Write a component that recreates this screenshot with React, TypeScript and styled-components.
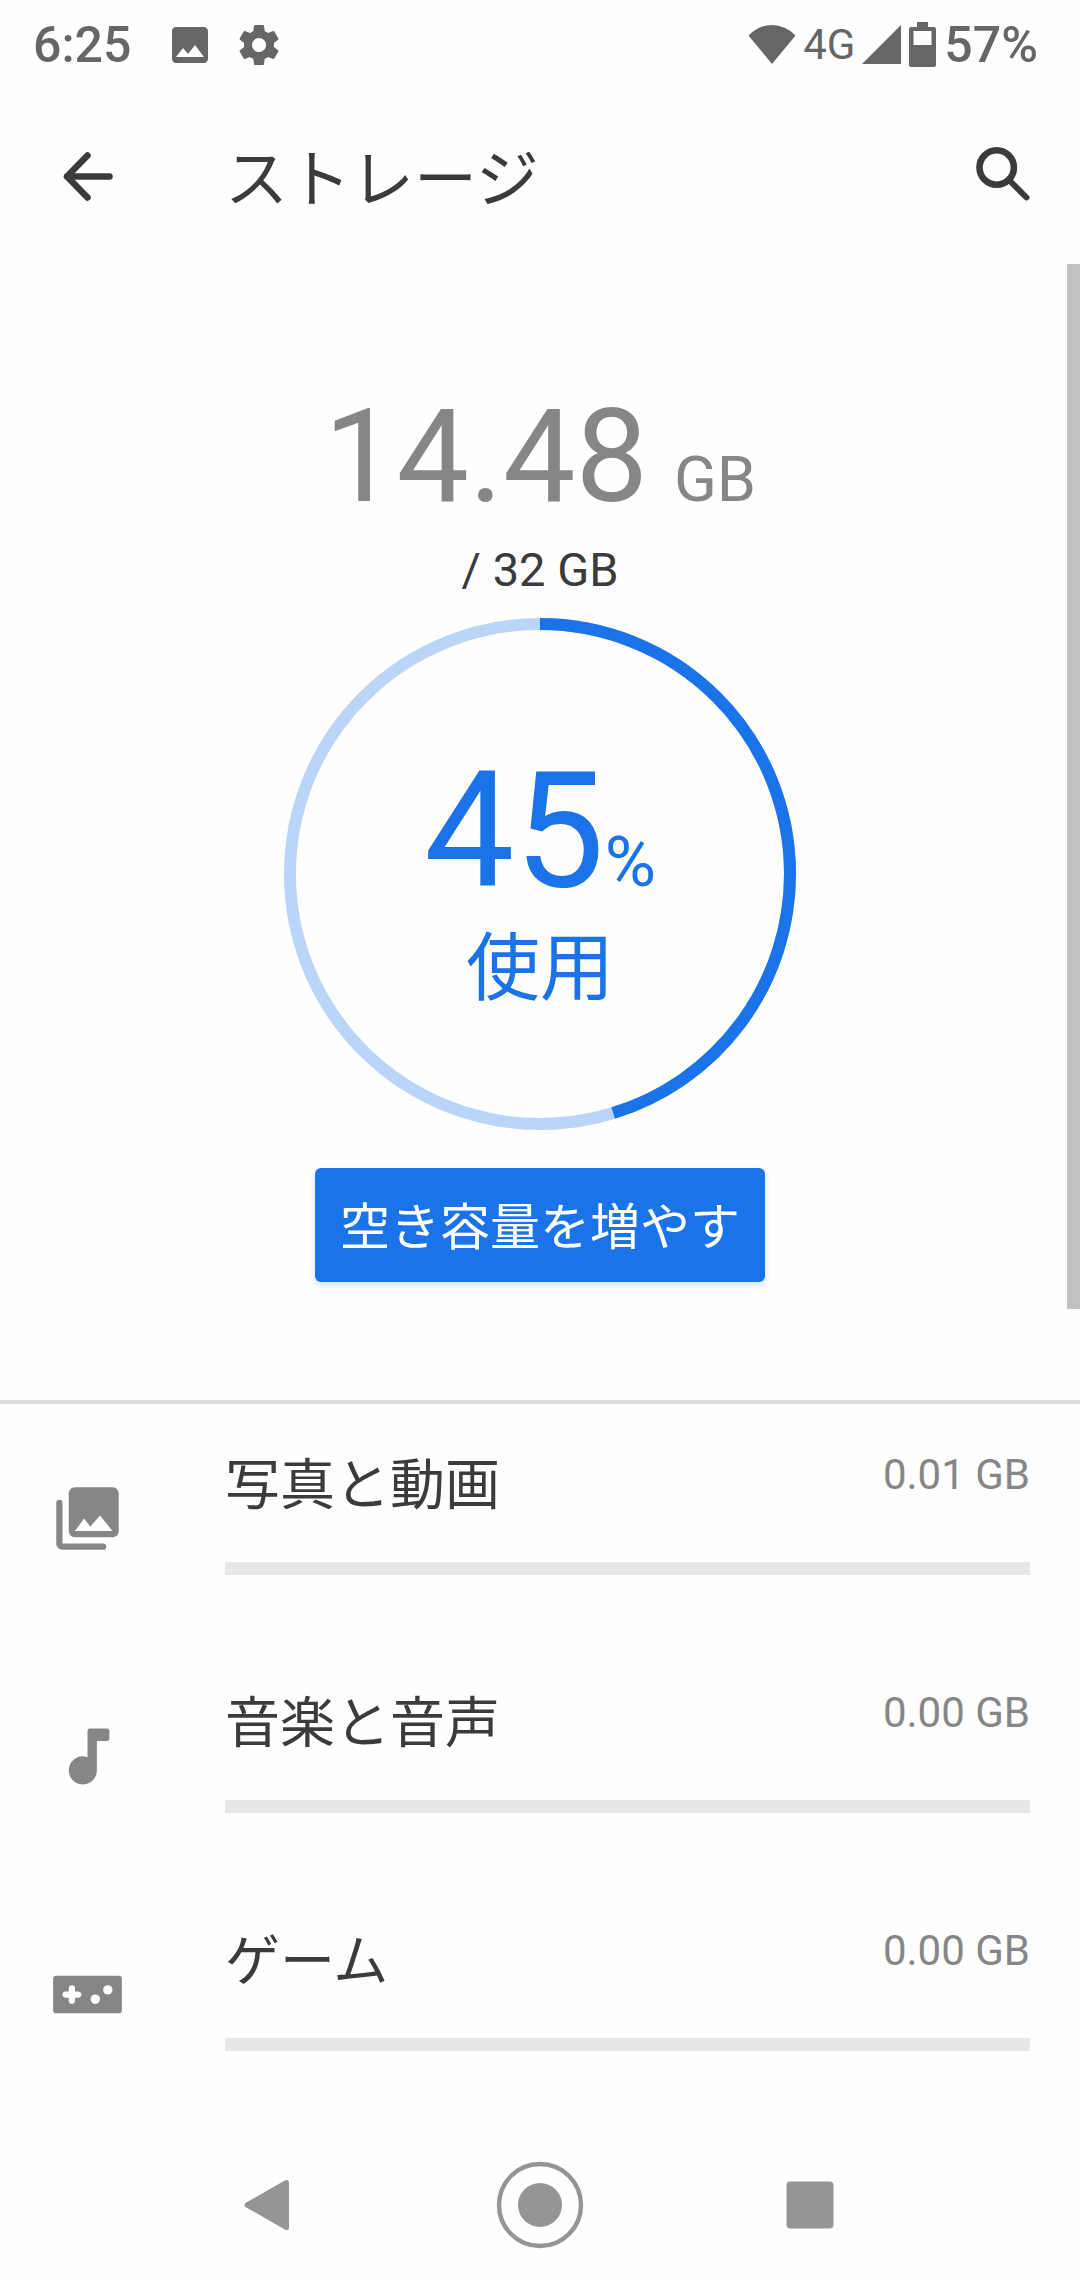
import React from "react";
import styled, { createGlobalStyle } from "styled-components";

const GlobalStyle = createGlobalStyle`
  *, *::before, *::after { box-sizing: border-box; }
  body {
    margin: 0;
    background: #fefefe;
    color: #3b3b3b;
    font-family: Roboto, "Noto Sans CJK JP", sans-serif;
  }
  button { font: inherit; color: inherit; }
`;

const Screen = styled.div`
  display: flex;
  flex-direction: column;
  min-height: 100vh;
`;

const StatusBar = styled.div`
  display: flex;
  align-items: center;
  justify-content: space-between;
  height: 90px;
  padding: 0 42px 0 33px;
  color: #666;
  font-size: 50px;
  font-weight: 500;
  line-height: 56px;
`;

const StatusGroup = styled.div<{ $gap: number }>`
  display: flex;
  align-items: center;
  gap: ${(p) => p.$gap}px;
`;

const Clock = styled.time`
  margin-right: 14px;
`;

const Network = styled.span`
  font-size: 42px;
  font-weight: 400;
`;

const Icon = styled.svg<{ $w: number; $h?: number }>`
  display: block;
  flex: none;
  width: ${(p) => p.$w}px;
  height: ${(p) => p.$h ?? p.$w}px;
  fill: currentColor;
`;

const AppBar = styled.header`
  display: grid;
  grid-template-columns: 173px 1fr auto;
  align-items: center;
  height: 174px;
  padding: 0 40px 0 52px;
`;

const IconButton = styled.button`
  justify-self: start;
  padding: 0;
  border: 0;
  background: none;
`;

const Title = styled.h1`
  margin: 0;
  padding-top: 6px;
  font-size: 63px;
  font-weight: 400;
  line-height: 88px;
`;

const Content = styled.main`
  position: relative;
  flex: 1;
`;

const ScrollThumb = styled.div`
  position: absolute;
  top: 0;
  right: 0;
  width: 13px;
  height: 56%;
  background: #c1c1c1;
`;

const Summary = styled.section`
  display: flex;
  flex-direction: column;
  align-items: center;
  padding: 118px 0;
  border-bottom: 4px solid #dcdcdc;
`;

const Used = styled.p`
  display: flex;
  align-items: baseline;
  gap: 26px;
  margin: 0;
  color: #868686;
  font-size: 129px;
  line-height: 150px;
`;

const UsedUnit = styled.span`
  font-size: 63px;
  line-height: 1;
`;

const Total = styled.p`
  margin: 0 0 10px;
  font-size: 47px;
  line-height: 76px;
`;

const Donut = styled.div`
  display: grid;
  width: 512px;
  height: 512px;
  margin-bottom: 38px;
  color: #1a73e8;

  & > * {
    grid-area: 1 / 1;
  }
`;

const DonutLabel = styled.div`
  display: flex;
  flex-direction: column;
  align-items: center;
  justify-content: center;
  gap: 10px;
  padding-top: 20px;
`;

const Percent = styled.span`
  font-size: 161px;
  line-height: 160px;
`;

const PercentSign = styled.span`
  font-size: 70px;
  line-height: 1;
`;

const UsedCaption = styled.span`
  font-size: 74px;
  line-height: 96px;
`;

const FreeButton = styled.button`
  height: 114px;
  padding: 6px 25px 0;
  border: 0;
  border-radius: 6px;
  background: #1a73e8;
  box-shadow: 0 3px 6px #1a73e833;
  color: #fff;
  font-size: 50px;
  line-height: 72px;
`;

const Categories = styled.ul`
  margin: 0;
  padding: 0;
  list-style: none;
`;

const Category = styled.a`
  display: grid;
  grid-template-columns: 175px 1fr;
  align-items: center;
  height: 238px;
  padding: 0 50px;
  color: inherit;
  text-decoration: none;
`;

const CategoryIcon = styled.span`
  margin-bottom: 10px;
  color: #868686;
`;

const CategoryBody = styled.span`
  display: flex;
  flex-direction: column;
  align-self: start;
  padding-top: 38px;
`;

const CategoryHead = styled.span`
  display: flex;
  justify-content: space-between;
  align-items: flex-start;
  height: 120px;
`;

const CategoryName = styled.span`
  font-size: 55px;
  line-height: 86px;
`;

const CategorySize = styled.span`
  color: #868686;
  font-size: 42px;
  line-height: 66px;
`;

const UsageBar = styled.progress`
  display: block;
  appearance: none;
  width: 100%;
  height: 13px;
  border: 0;
  background: #e7e7e7;

  &::-webkit-progress-bar {
    background: #e7e7e7;
  }
  &::-webkit-progress-value {
    background: #1a73e8;
  }
`;

const NavBar = styled.nav`
  display: grid;
  grid-template-columns: repeat(3, 1fr);
  align-items: center;
  justify-items: center;
  height: 150px;
  padding: 0 12.5%;
  color: #959595;
`;

const NavButton = styled.button`
  padding: 0;
  border: 0;
  background: none;
`;

const TOTAL_GB = 32;
const USED_GB = 14.48;
const RADIUS = 250;
const CIRCUMFERENCE = 2 * Math.PI * RADIUS;

const categories = [
  {
    id: "photos",
    name: "写真と動画",
    gb: 0.01,
    icon: (
      <>
        <path d="M22 16V4c0-1.1-.9-2-2-2H8c-1.1 0-2 .9-2 2v12c0 1.1.9 2 2 2h12c1.1 0 2-.9 2-2zM10.900 12l2 2.600L16 11l4 5H8z" />
        <path d="M3 7v13a1 1 0 0 0 1 1h13" fill="none" stroke="currentColor" strokeWidth="2" strokeLinecap="round" />
      </>
    ),
  },
  {
    id: "music",
    name: "音楽と音声",
    gb: 0,
    icon: (
      <path d="M12.800 3h5.400a.8.8 0 0 1 .8.8v2.400a.8.8 0 0 1-.8.8H15v9.500A4.500 4.500 0 1 1 12 12.200V3.800a.8.8 0 0 1 .8-.8z" />
    ),
  },
  {
    id: "games",
    name: "ゲーム",
    gb: 0,
    icon: (
      <>
        <rect x="1" y="6" width="22" height="12" rx="1" />
        <g fill="#fefefe">
          <rect x="4" y="11" width="6" height="2" rx="1" />
          <rect x="6" y="9" width="2" height="6" rx="1" />
          <circle cx="14.5" cy="13.5" r="1.5" />
          <circle cx="18.5" cy="10.5" r="1.5" />
        </g>
      </>
    ),
  },
];

export default function App() {
  return (
    <Screen>
      <GlobalStyle />
      <StatusBar>
        <StatusGroup $gap={21}>
          <Clock>6:25</Clock>
          <Icon $w={48} viewBox="0 0 24 24" aria-hidden="true">
            <path d="M21 19V5c0-1.1-.9-2-2-2H5c-1.1 0-2 .9-2 2v14c0 1.1.9 2 2 2h14c1.1 0 2-.9 2-2zM8.500 13.500l2.500 3 3.500-4.500L19 18H5z" />
          </Icon>
          <Icon $w={48} viewBox="0 0 24 24" aria-hidden="true">
            <path d="M19.430 12.980c.04-.32.07-.64.07-.98s-.03-.66-.07-.98l2.110-1.650c.19-.15.24-.42.12-.64l-2-3.460c-.12-.22-.39-.3-.61-.22l-2.490 1c-.52-.4-1.080-.73-1.690-.98l-.38-2.650C14.460 2.180 14.250 2 14 2h-4c-.25 0-.46.18-.49.42l-.38 2.650c-.61.25-1.170.59-1.690.98l-2.490-1c-.23-.09-.49 0-.61.22l-2 3.460c-.13.22-.07.49.12.64l2.110 1.650c-.04.32-.07.65-.07.98s.03.66.07.98l-2.110 1.650c-.19.15-.24.42-.12.64l2 3.460c.12.22.39.3.61.22l2.490-1c.52.4 1.080.73 1.690.98l.38 2.650c.03.24.24.42.49.42h4c.25 0 .46-.18.49-.42l.38-2.650c.61-.25 1.170-.59 1.690-.98l2.490 1c.23.09.49 0 .61-.22l2-3.460c.12-.22.07-.49-.12-.64l-2.110-1.650zM12 15.500c-1.930 0-3.500-1.570-3.500-3.500s1.570-3.500 3.500-3.500 3.500 1.570 3.500 3.500-1.570 3.500-3.500 3.500z" />
          </Icon>
        </StatusGroup>
        <StatusGroup $gap={7}>
          <Icon $w={48} $h={42} viewBox="0 0 48 42" aria-hidden="true">
            <path d="M24 40L0.500 11.500Q10.500 1 24 1T47.500 11.500z" />
          </Icon>
          <Network>4G</Network>
          <Icon $w={40} $h={42} viewBox="0 0 40 42" aria-hidden="true">
            <path d="M0 40L39 1V40z" />
          </Icon>
          <Icon $w={28} $h={46} viewBox="0 0 28 46" aria-hidden="true">
            <path
              fillRule="evenodd"
              d="M8 0h11v5h6a2 2 0 0 1 2 2v36a2 2 0 0 1-2 2H2a2 2 0 0 1-2-2V7a2 2 0 0 1 2-2h6zM4.500 9v14h18V9z"
            />
          </Icon>
          <span>57%</span>
        </StatusGroup>
      </StatusBar>

      <AppBar>
        <IconButton type="button" aria-label="戻る">
          <Icon $w={72} viewBox="0 0 72 72" aria-hidden="true">
            <path
              d="M35.500 14.500L15 35.500L35.500 56.500M15 35.500H57.500"
              fill="none"
              stroke="currentColor"
              strokeWidth="6.5"
              strokeLinecap="round"
              strokeLinejoin="round"
            />
          </Icon>
        </IconButton>
        <Title>ストレージ</Title>
        <IconButton type="button" aria-label="検索">
          <Icon $w={72} viewBox="0 0 72 72" aria-hidden="true">
            <g fill="none" stroke="currentColor" strokeLinecap="round">
              <circle cx="28.7" cy="26.5" r="17.2" strokeWidth="6.6" />
              <path d="M42 40L58.500 56.500" strokeWidth="6" />
            </g>
          </Icon>
        </IconButton>
      </AppBar>

      <Content>
        <ScrollThumb />
        <Summary>
          <Used>
            {USED_GB}
            <UsedUnit>GB</UsedUnit>
          </Used>
          <Total>/ {TOTAL_GB} GB</Total>
          <Donut>
            <Icon $w={512} viewBox="0 0 512 512" aria-hidden="true">
              <g fill="none" strokeWidth="12" transform="rotate(-90 256 256)">
                <circle cx="256" cy="256" r={RADIUS} stroke="#bad5f8" />
                <circle
                  cx="256"
                  cy="256"
                  r={RADIUS}
                  stroke="currentColor"
                  strokeDasharray={`${(CIRCUMFERENCE * USED_GB) / TOTAL_GB} ${CIRCUMFERENCE}`}
                />
              </g>
            </Icon>
            <DonutLabel>
              <Percent>
                45<PercentSign>%</PercentSign>
              </Percent>
              <UsedCaption>使用</UsedCaption>
            </DonutLabel>
          </Donut>
          <FreeButton type="button">空き容量を増やす</FreeButton>
        </Summary>

        <Categories>
          {categories.map((c) => (
            <li key={c.id}>
              <Category href={`#${c.id}`}>
                <CategoryIcon>
                  <Icon $w={75} viewBox="0 0 24 24" aria-hidden="true">
                    {c.icon}
                  </Icon>
                </CategoryIcon>
                <CategoryBody>
                  <CategoryHead>
                    <CategoryName>{c.name}</CategoryName>
                    <CategorySize>{c.gb.toFixed(2)} GB</CategorySize>
                  </CategoryHead>
                  <UsageBar value={Math.round(c.gb)} max={TOTAL_GB} aria-label={c.name} />
                </CategoryBody>
              </Category>
            </li>
          ))}
        </Categories>
      </Content>

      <NavBar>
        <NavButton type="button" aria-label="戻る">
          <Icon $w={90} viewBox="0 0 90 90" aria-hidden="true">
            <path
              d="M22 45L61.500 22.500V67.500z"
              stroke="currentColor"
              strokeWidth="5"
              strokeLinejoin="round"
            />
          </Icon>
        </NavButton>
        <NavButton type="button" aria-label="ホーム">
          <Icon $w={90} viewBox="0 0 90 90" aria-hidden="true">
            <circle cx="45" cy="45" r="41" fill="none" stroke="currentColor" strokeWidth="4.5" />
            <circle cx="45" cy="45" r="22" />
          </Icon>
        </NavButton>
        <NavButton type="button" aria-label="アプリ履歴">
          <Icon $w={90} viewBox="0 0 90 90" aria-hidden="true">
            <rect x="21.5" y="21.5" width="47" height="47" rx="4" />
          </Icon>
        </NavButton>
      </NavBar>
    </Screen>
  );
}
